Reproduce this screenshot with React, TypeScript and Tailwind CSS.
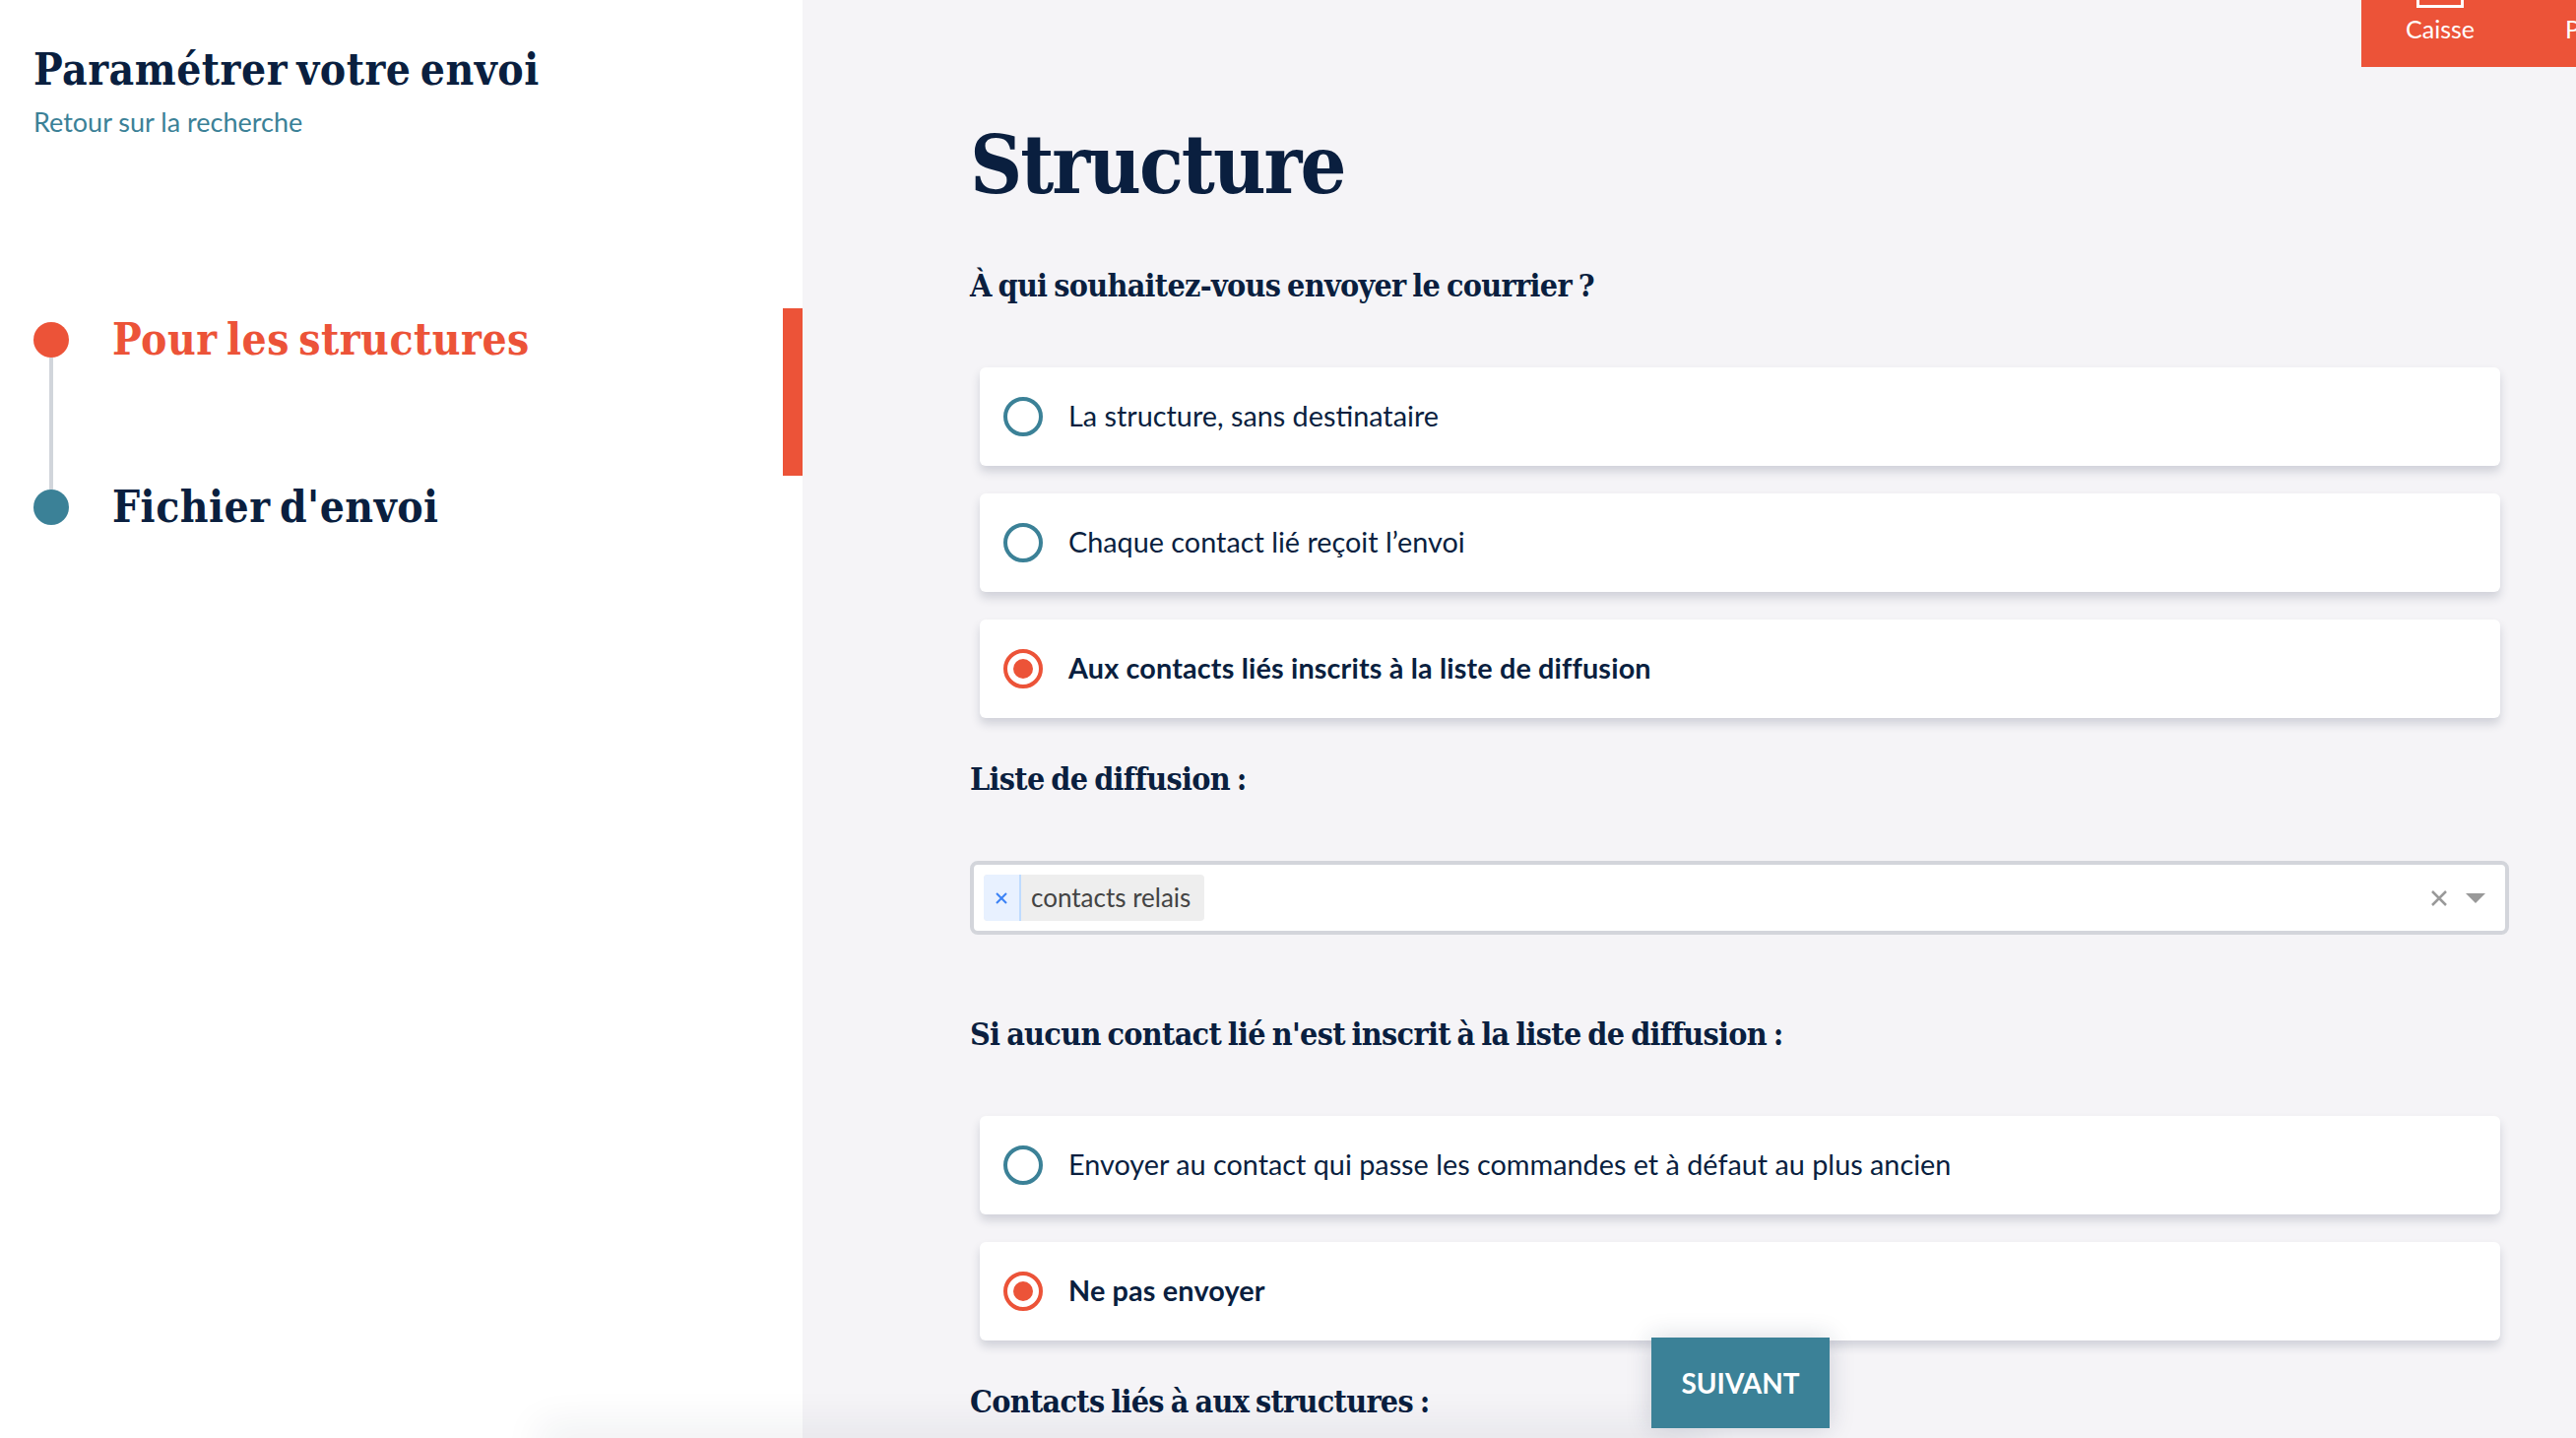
import React from 'react';

const SERIF = 'font-["DejaVu_Serif_Condensed","DejaVu_Serif",serif]';

function Radio({ label, checked }: { label: string; checked?: boolean }) {
  return (
    <div className="flex h-[100px] items-center gap-[26px] rounded-md bg-white pl-6 shadow-[0_6px_10px_rgba(30,40,70,0.17)]">
      <span
        className={
          checked
            ? 'flex h-10 w-10 items-center justify-center rounded-full border-4 border-[#ec5338]'
            : 'flex h-10 w-10 items-center justify-center rounded-full border-4 border-[#3b8197]'
        }
      >
        {checked && <span className="h-5 w-5 rounded-full bg-[#ec5338]" />}
      </span>
      <span className={checked ? 'text-[28.8px] font-bold tracking-[0.15px] text-[#0a1f3f]' : 'text-[28.8px] text-[#0a1f3f]'}>{label}</span>
    </div>
  );
}

function Question({ children, className }: { children: React.ReactNode; className: string }) {
  return (
    <h2 className={`text-[32px] font-bold leading-[40px] tracking-[-0.7px] text-[#0a1f3f] [word-spacing:-2.5px] ${SERIF} ${className}`}>
      {children}
    </h2>
  );
}

export default function App() {
  return (
    <div className='relative flex h-[1460px] w-[2616px] overflow-hidden bg-[#f5f4f7] font-["Lato",sans-serif]'>
      <aside className="relative w-[815px] shrink-0 bg-white pl-[34px] pt-[42px]">
        <h1 className={`text-[44px] font-bold leading-[58px] tracking-[0.5px] text-[#0a1f3f] [word-spacing:-5px] ${SERIF}`}>Paramétrer votre envoi</h1>
        <a className="mt-[8px] block text-[27px] leading-[32px] text-[#3b8197]">Retour sur la recherche</a>

        <div className="mt-[187px]">
          <div className="flex items-center gap-[44px]">
            <span className="h-9 w-9 rounded-full bg-[#ec5338]" />
            <span className={`text-[44px] font-bold leading-[36px] tracking-[0.5px] text-[#ec5338] [word-spacing:-5px] ${SERIF}`}>Pour les structures</span>
          </div>
          <div className="ml-[16px] h-[134px] w-1 bg-[#d1d5db]" />
          <div className="flex items-center gap-[44px]">
            <span className="h-9 w-9 rounded-full bg-[#3b8197]" />
            <span className={`text-[44px] font-bold leading-[36px] tracking-[0.5px] text-[#0a1f3f] [word-spacing:-5px] ${SERIF}`}>Fichier d'envoi</span>
          </div>
        </div>

        <div className="absolute right-0 top-[313px] h-[170px] w-5 bg-[#ec5338]" />
      </aside>

      <main className="flex-1 pl-[170px] pr-[68px] pt-[117px]">
        <h1 className={`text-[82px] font-bold leading-[100px] tracking-[-2px] text-[#0a1f3f] ${SERIF}`}>Structure</h1>
        <Question className="mt-[53px]">À qui souhaitez-vous envoyer le courrier ?</Question>

        <div className="ml-[10px] mr-[9px] mt-[63px] flex flex-col gap-7">
          <Radio label="La structure, sans destinataire" />
          <Radio label="Chaque contact lié reçoit l’envoi" />
          <Radio label="Aux contacts liés inscrits à la liste de diffusion" checked />
        </div>

        <Question className="mt-[42px]">Liste de diffusion :</Question>

        <div className="mt-[63px] flex h-[75px] items-center rounded-lg border-4 border-[#d3d5db] bg-white pl-[10px] pr-5">
          <div className="flex h-[47px] w-[224px] overflow-hidden rounded bg-[#eeeeee]">
            <span className="flex w-[38px] items-center justify-center border-r-2 border-[#bfdbfe] bg-[#e8f1ff]">
              <svg width="12" height="12" viewBox="0 0 12 12" fill="none" stroke="#3b82f6" strokeWidth="2">
                <path d="M1 1l10 10M11 1L1 11" />
              </svg>
            </span>
            <span className="flex-1 pl-[10px] text-[26px] leading-[47px] text-[#444444]">contacts relais</span>
          </div>
          <div className="ml-auto flex items-center gap-[19px]">
            <svg width="16" height="16" viewBox="0 0 16 16" fill="none" stroke="#999999" strokeWidth="2.5">
              <path d="M1 1l14 14M15 1L1 15" />
            </svg>
            <svg width="20" height="10" viewBox="0 0 20 10" fill="#999999">
              <path d="M0 0h20L10 10z" />
            </svg>
          </div>
        </div>

        <Question className="mt-[81px]">Si aucun contact lié n'est inscrit à la liste de diffusion :</Question>

        <div className="ml-[10px] mr-[9px] mt-[63px] flex flex-col gap-7">
          <Radio label="Envoyer au contact qui passe les commandes et à défaut au plus ancien" />
          <Radio label="Ne pas envoyer" checked />
        </div>

        <Question className="mt-[42px]">Contacts liés à aux structures :</Question>
      </main>

      <div className="absolute right-0 top-0 flex h-[68px] w-[218px] gap-[92px] overflow-hidden bg-[#ec5338] pl-[45px] text-[25px] leading-[30px] text-white">
        <div className="relative pt-[14px]">
          <span className="absolute left-[11px] top-[-40px] h-[48px] w-[48px] border-[3px] border-white" />
          Caisse
        </div>
        <div className="pt-[14px]">P</div>
      </div>

      <div className="absolute bottom-[-10px] left-[560px] h-[10px] w-[1160px] shadow-[0_0_40px_12px_rgba(30,40,70,0.08)]" />

      <button className="absolute bottom-[10px] left-[1677px] h-[92px] w-[181px] bg-[#3b8197] text-[28px] font-bold text-white shadow-[0_0_24px_rgba(30,40,70,0.18)]">
        SUIVANT
      </button>
    </div>
  );
}
